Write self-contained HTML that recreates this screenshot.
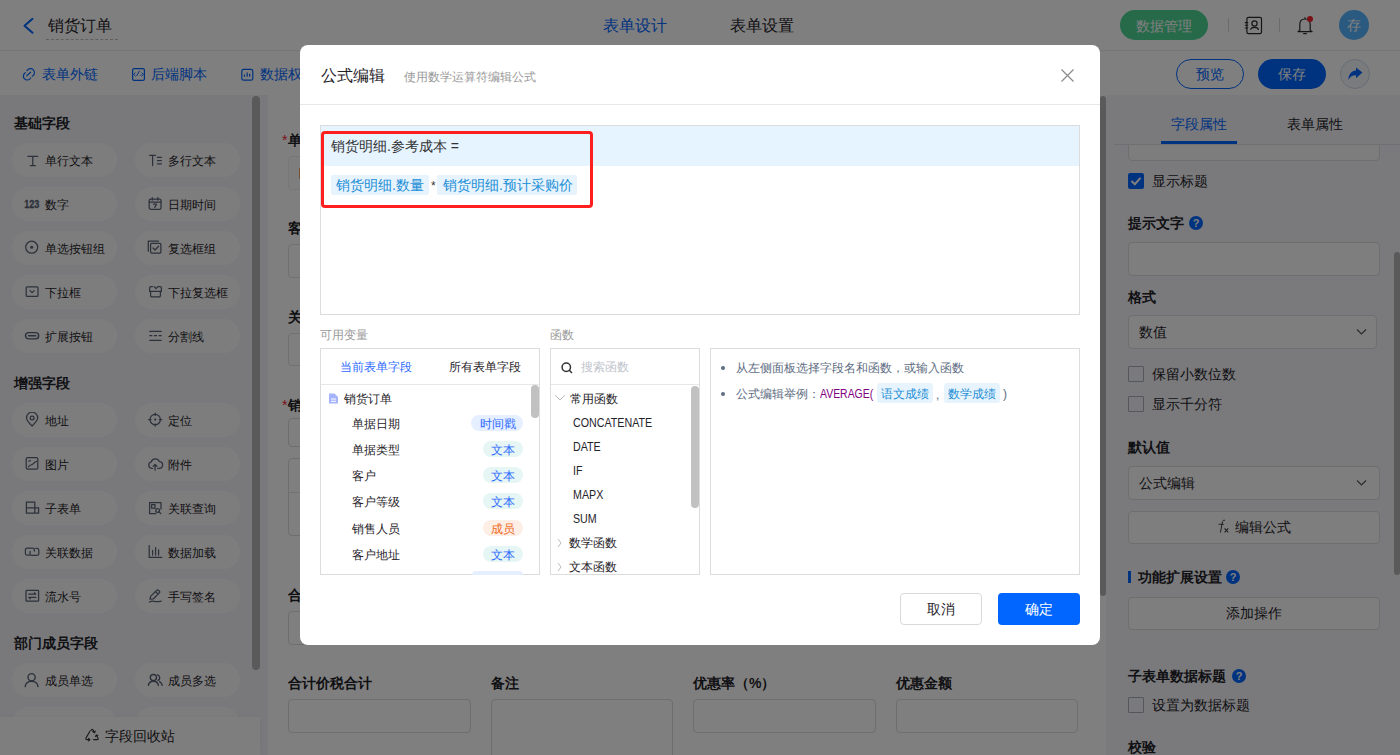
<!DOCTYPE html>
<html><head><meta charset="utf-8">
<style>
*{box-sizing:border-box;margin:0;padding:0}
html,body{width:1400px;height:755px;overflow:hidden;background:#fff;font-family:"Liberation Sans",sans-serif;color:#1f2329}
.a{position:absolute;display:block}
.t{position:absolute;white-space:nowrap;line-height:1}
</style></head><body>
<div class="a" style="left:0px;top:0px;width:1400px;height:51px;background:#fff;border-bottom:1px solid #e8e8e8"></div>
<svg class="a" style="left:22px;top:17px;" width="14" height="18" viewBox="0 0 14 18"><polyline points="10.5,1.8 2.5,8.8 10.5,15.8" fill="none" stroke="#0066ff" stroke-width="2" stroke-linecap="round" stroke-linejoin="round"/></svg>
<div class="t" style="left:48px;top:18px;font-size:16px;color:#1f2329;font-weight:normal;">销货订单</div>
<div class="a" style="left:46px;top:39px;width:72px;height:1px;border-top:1px dashed #bfbfbf"></div>
<div class="t" style="left:603px;top:18px;font-size:16px;color:#0066ff;font-weight:normal;">表单设计</div>
<div class="t" style="left:730px;top:18px;font-size:16px;color:#1f2329;font-weight:normal;">表单设置</div>
<div class="a" style="left:1120px;top:10px;width:88px;height:30px;background:#4cd494;border-radius:15px"></div>
<div class="t" style="left:1136px;top:19px;font-size:14px;color:#fff;font-weight:normal;">数据管理</div>
<div class="a" style="left:1228px;top:18px;width:1px;height:14px;background:#d9d9d9"></div>
<svg class="a" style="left:1244px;top:16px;" width="19" height="19" viewBox="0 0 19 19"><rect x="2.9" y="1.4" width="14.6" height="16.2" rx="1.6" fill="none" stroke="#2b2b2b" stroke-width="1.2"/><circle cx="10.5" cy="7.5" r="2.6" fill="none" stroke="#2b2b2b" stroke-width="1.2"/><path d="M6.6 13.8 C7 10.6 14 10.6 14.6 13.8" fill="none" stroke="#2b2b2b" stroke-width="1.2"/><path d="M0.8 6.6h3.4M0.8 9.3h3.4M0.8 12h3.4" stroke="#2b2b2b" stroke-width="1.1"/></svg>
<div class="a" style="left:1279px;top:18px;width:1px;height:14px;background:#d9d9d9"></div>
<svg class="a" style="left:1296px;top:15px;" width="18" height="20" viewBox="0 0 18 20"><path d="M3.8 15.5 V9.5 C3.8 6 5.8 4 9 4 C12.2 4 14.2 6 14.2 9.5 V15.5 L16 16.6 H2 Z" fill="none" stroke="#2b2b2b" stroke-width="1.2" stroke-linejoin="round"/><path d="M7.2 18.6 H10.8" stroke="#2b2b2b" stroke-width="1.2"/><path d="M9 2.2V4" stroke="#2b2b2b" stroke-width="1.2"/><circle cx="14" cy="4" r="3" fill="#f5222d"/></svg>
<div class="a" style="left:1339px;top:10px;width:30px;height:30px;background:#55b4ff;border-radius:50%"></div>
<div class="t" style="left:1347px;top:18px;font-size:14px;color:#fff;font-weight:normal;">存</div>
<div class="a" style="left:0px;top:51px;width:1400px;height:45px;background:#fff"></div>
<svg class="a" style="left:22px;top:67px;" width="14" height="14" viewBox="0 0 14 14"><path d="M4.7 8.9 L8.6 5.2" stroke="#0066ff" stroke-width="1.2" stroke-linecap="round"/><path d="M5 3.6 A4 4 0 1 1 10.3 9.2" fill="none" stroke="#0066ff" stroke-width="1.2" stroke-linecap="round"/><path d="M3.4 5.7 A3.9 3.9 0 1 0 8.7 11" fill="none" stroke="#0066ff" stroke-width="1.2" stroke-linecap="round"/></svg>
<div class="t" style="left:42px;top:67px;font-size:14px;color:#0066ff;font-weight:normal;">表单外链</div>
<svg class="a" style="left:132px;top:68px;" width="13" height="13" viewBox="0 0 13 13"><rect x="0.6" y="0.6" width="11.8" height="11.8" rx="1.5" fill="none" stroke="#0066ff" stroke-width="1.2"/><path d="M3.4 4.6 L1.6 6.4 L3.6 8.2 M9.6 4.6 L11.4 6.4 L9.4 8.2 M4.6 8 L7.5 2.7 M8.3 7.6 L9 6.6" fill="none" stroke="#0066ff" stroke-width="1"/></svg>
<div class="t" style="left:151px;top:67px;font-size:14px;color:#0066ff;font-weight:normal;">后端脚本</div>
<svg class="a" style="left:241px;top:68px;" width="13" height="13" viewBox="0 0 13 13"><rect x="0.8" y="1.4" width="11" height="10.8" rx="1.8" fill="none" stroke="#0066ff" stroke-width="1.2"/><path d="M3.5 8.8V6.4 M6.2 8.8V4.6 M8.7 8.8V5.8" stroke="#0066ff" stroke-width="1.2"/></svg>
<div class="t" style="left:260px;top:67px;font-size:14px;color:#0066ff;font-weight:normal;">数据权限</div>
<div class="a" style="left:1176px;top:59px;width:68px;height:30px;border:1px solid #0066ff;border-radius:15px;background:#fff"></div>
<div class="t" style="left:1196px;top:67px;font-size:14px;color:#0066ff;font-weight:normal;">预览</div>
<div class="a" style="left:1258px;top:59px;width:68px;height:30px;background:#0066ff;border-radius:15px"></div>
<div class="t" style="left:1278px;top:67px;font-size:14px;color:#fff;font-weight:normal;">保存</div>
<div class="a" style="left:1340px;top:59px;width:30px;height:30px;border:1px solid #cfd8e8;border-radius:50%;background:#f3f6fb"></div>
<svg class="a" style="left:1346px;top:66px;" width="18" height="16" viewBox="0 0 18 16"><path d="M10 1.4 L16.4 6.6 L10 12.2 V9.2 C6.5 9.2 4.2 10.6 2.3 14 C2.4 8.6 5.4 4.6 10 4.4 Z" fill="#0066ff"/></svg>
<div class="a" style="left:0px;top:95px;width:268px;height:660px;background:#f2f3f6"></div>
<div class="a" style="left:252px;top:96px;width:8px;height:574px;background:#b4b4b4;border-radius:4px"></div>
<div class="t" style="left:14px;top:116px;font-size:14px;color:#1f2329;font-weight:bold;">基础字段</div>
<div class="a" style="left:12px;top:143px;width:105px;height:34px;background:#fbfbfc;border-radius:17px"></div>
<svg class="a" style="left:24px;top:152px;" width="17" height="17" viewBox="0 0 17 17"><path d="M3.9 4.4H13.7 M8.8 4.4V13.6 M6.2 13.6H11.4" stroke="#596275" stroke-width="1.25" fill="none" stroke-linecap="round" stroke-linejoin="round"/></svg>
<div class="t" style="left:45px;top:155px;font-size:12px;color:#1f2329;font-weight:normal;">单行文本</div>
<div class="a" style="left:135px;top:143px;width:105px;height:34px;background:#fbfbfc;border-radius:17px"></div>
<svg class="a" style="left:147px;top:152px;" width="17" height="17" viewBox="0 0 17 17"><path d="M2.6 3.3H8.6 M5.6 3.3V13.6 M10.4 5.4H14.4 M10.4 8.6H14.4 M10.4 11.8H14.4" stroke="#596275" stroke-width="1.25" fill="none" stroke-linecap="round" stroke-linejoin="round"/></svg>
<div class="t" style="left:168px;top:155px;font-size:12px;color:#1f2329;font-weight:normal;">多行文本</div>
<div class="a" style="left:12px;top:187px;width:105px;height:34px;background:#fbfbfc;border-radius:17px"></div>
<svg class="a" style="left:24px;top:196px;" width="17" height="17" viewBox="0 0 17 17"><text x="0.2" y="11.6" font-size="10.6" font-weight="bold" font-family="Liberation Sans" fill="#596275" stroke="#596275" stroke-width="0.3" textLength="15.2" lengthAdjust="spacingAndGlyphs">123</text></svg>
<div class="t" style="left:45px;top:199px;font-size:12px;color:#1f2329;font-weight:normal;">数字</div>
<div class="a" style="left:135px;top:187px;width:105px;height:34px;background:#fbfbfc;border-radius:17px"></div>
<svg class="a" style="left:147px;top:196px;" width="17" height="17" viewBox="0 0 17 17"><rect x="2.2" y="3" width="11.8" height="10.4" rx="1.6" stroke="#596275" stroke-width="1.25" fill="none" stroke-linecap="round" stroke-linejoin="round"/><path d="M2.2 6.2H14 M5.3 1.6V4 M10.9 1.6V4 M6.6 8.2H9.4L7.8 11.4" stroke="#596275" stroke-width="1.25" fill="none" stroke-linecap="round" stroke-linejoin="round"/></svg>
<div class="t" style="left:168px;top:199px;font-size:12px;color:#1f2329;font-weight:normal;">日期时间</div>
<div class="a" style="left:12px;top:231px;width:105px;height:34px;background:#fbfbfc;border-radius:17px"></div>
<svg class="a" style="left:24px;top:240px;" width="17" height="17" viewBox="0 0 17 17"><circle cx="7.7" cy="7.2" r="6" stroke="#596275" stroke-width="1.25" fill="none" stroke-linecap="round" stroke-linejoin="round"/><circle cx="7.7" cy="7.2" r="1.5" fill="#596275"/></svg>
<div class="t" style="left:45px;top:243px;font-size:12px;color:#1f2329;font-weight:normal;">单选按钮组</div>
<div class="a" style="left:135px;top:231px;width:105px;height:34px;background:#fbfbfc;border-radius:17px"></div>
<svg class="a" style="left:147px;top:240px;" width="17" height="17" viewBox="0 0 17 17"><path d="M1.3 11.2V1.2H11.4" stroke="#596275" stroke-width="1.25" fill="none" stroke-linecap="round" stroke-linejoin="round"/><rect x="3.6" y="3.4" width="10.3" height="9.6" rx="1" stroke="#596275" stroke-width="1.25" fill="none" stroke-linecap="round" stroke-linejoin="round"/><path d="M6 8L8 10L11.6 6.2" stroke="#596275" stroke-width="1.25" fill="none" stroke-linecap="round" stroke-linejoin="round"/></svg>
<div class="t" style="left:168px;top:243px;font-size:12px;color:#1f2329;font-weight:normal;">复选框组</div>
<div class="a" style="left:12px;top:275px;width:105px;height:34px;background:#fbfbfc;border-radius:17px"></div>
<svg class="a" style="left:24px;top:284px;" width="17" height="17" viewBox="0 0 17 17"><rect x="2.2" y="2.8" width="11.8" height="9.6" rx="1" stroke="#596275" stroke-width="1.25" fill="none" stroke-linecap="round" stroke-linejoin="round"/><path d="M6 6.6L8.1 8.6L10.2 6.6" stroke="#596275" stroke-width="1.25" fill="none" stroke-linecap="round" stroke-linejoin="round"/></svg>
<div class="t" style="left:45px;top:287px;font-size:12px;color:#1f2329;font-weight:normal;">下拉框</div>
<div class="a" style="left:135px;top:275px;width:105px;height:34px;background:#fbfbfc;border-radius:17px"></div>
<svg class="a" style="left:147px;top:284px;" width="17" height="17" viewBox="0 0 17 17"><path d="M5.5 2.6H3.6A1.3 1.3 0 0 0 2.6 3.9V7.4H14.4V3.9A1.3 1.3 0 0 0 13.1 2.6H11.5" stroke="#596275" stroke-width="1.25" fill="none" stroke-linecap="round" stroke-linejoin="round"/><path d="M7.2 2.6L9 4.6L10.8 2.6" stroke="#596275" stroke-width="1.25" fill="none" stroke-linecap="round" stroke-linejoin="round"/><path d="M3.6 7.4V11.6A1.2 1.2 0 0 0 4.8 12.8H12.2A1.2 1.2 0 0 0 13.4 11.6V7.4" stroke="#596275" stroke-width="1.25" fill="none" stroke-linecap="round" stroke-linejoin="round"/></svg>
<div class="t" style="left:168px;top:287px;font-size:12px;color:#1f2329;font-weight:normal;">下拉复选框</div>
<div class="a" style="left:12px;top:319px;width:105px;height:34px;background:#fbfbfc;border-radius:17px"></div>
<svg class="a" style="left:24px;top:328px;" width="17" height="17" viewBox="0 0 17 17"><rect x="1.5" y="4.6" width="13.2" height="6.3" rx="3.15" stroke="#596275" stroke-width="1.4" fill="none"/><path d="M4.6 7.75H11.6" stroke="#596275" stroke-width="1.6" stroke-linecap="round"/></svg>
<div class="t" style="left:45px;top:331px;font-size:12px;color:#1f2329;font-weight:normal;">扩展按钮</div>
<div class="a" style="left:135px;top:319px;width:105px;height:34px;background:#fbfbfc;border-radius:17px"></div>
<svg class="a" style="left:147px;top:328px;" width="17" height="17" viewBox="0 0 17 17"><path d="M2.8 3.4H14.2 M2.8 7.7H4.9 M7.4 7.7H9.6 M12.1 7.7H14.2 M2.8 12.4H14.2" stroke="#596275" stroke-width="1.25" fill="none" stroke-linecap="round" stroke-linejoin="round"/></svg>
<div class="t" style="left:168px;top:331px;font-size:12px;color:#1f2329;font-weight:normal;">分割线</div>
<div class="t" style="left:14px;top:376px;font-size:14px;color:#1f2329;font-weight:bold;">增强字段</div>
<div class="a" style="left:12px;top:403px;width:105px;height:34px;background:#fbfbfc;border-radius:17px"></div>
<svg class="a" style="left:24px;top:412px;" width="17" height="17" viewBox="0 0 17 17"><path d="M8.1 14C4.2 10.3 2.5 7.9 2.5 5.8A5.6 5.6 0 0 1 13.7 5.8C13.7 7.9 12 10.3 8.1 14Z" stroke="#596275" stroke-width="1.25" fill="none" stroke-linecap="round" stroke-linejoin="round"/><circle cx="8.1" cy="6" r="1.9" stroke="#596275" stroke-width="1.25" fill="none" stroke-linecap="round" stroke-linejoin="round"/></svg>
<div class="t" style="left:45px;top:415px;font-size:12px;color:#1f2329;font-weight:normal;">地址</div>
<div class="a" style="left:135px;top:403px;width:105px;height:34px;background:#fbfbfc;border-radius:17px"></div>
<svg class="a" style="left:147px;top:412px;" width="17" height="17" viewBox="0 0 17 17"><circle cx="8.2" cy="7.6" r="5.2" stroke="#596275" stroke-width="1.25" fill="none" stroke-linecap="round" stroke-linejoin="round"/><circle cx="8.2" cy="7.6" r="1.1" fill="#596275"/><path d="M8.2 1V3.4 M8.2 11.8V14.2 M1.6 7.6H4 M12.4 7.6H14.8" stroke="#596275" stroke-width="1.25" fill="none" stroke-linecap="round" stroke-linejoin="round"/></svg>
<div class="t" style="left:168px;top:415px;font-size:12px;color:#1f2329;font-weight:normal;">定位</div>
<div class="a" style="left:12px;top:447px;width:105px;height:34px;background:#fbfbfc;border-radius:17px"></div>
<svg class="a" style="left:24px;top:456px;" width="17" height="17" viewBox="0 0 17 17"><rect x="2.2" y="1.6" width="11.6" height="11.6" rx="1.4" stroke="#596275" stroke-width="1.25" fill="none" stroke-linecap="round" stroke-linejoin="round"/><path d="M4.4 11C6 8 8 9.4 9.4 7.6C10.4 6.3 11.5 5.6 12.8 5.4 M4.8 5.2L6.2 4.6" stroke="#596275" stroke-width="1.25" fill="none" stroke-linecap="round" stroke-linejoin="round"/></svg>
<div class="t" style="left:45px;top:459px;font-size:12px;color:#1f2329;font-weight:normal;">图片</div>
<div class="a" style="left:135px;top:447px;width:105px;height:34px;background:#fbfbfc;border-radius:17px"></div>
<svg class="a" style="left:147px;top:456px;" width="17" height="17" viewBox="0 0 17 17"><path d="M5.5 12.3H4.6A3.2 3.2 0 0 1 4.2 6A4.3 4.3 0 0 1 12.3 5.6A3.3 3.3 0 0 1 12.2 12.3H10.7" stroke="#596275" stroke-width="1.25" fill="none" stroke-linecap="round" stroke-linejoin="round"/><path d="M8.1 14.2V8.6 M6.2 10.4L8.1 8.5L10 10.4" stroke="#596275" stroke-width="1.25" fill="none" stroke-linecap="round" stroke-linejoin="round"/></svg>
<div class="t" style="left:168px;top:459px;font-size:12px;color:#1f2329;font-weight:normal;">附件</div>
<div class="a" style="left:12px;top:491px;width:105px;height:34px;background:#fbfbfc;border-radius:17px"></div>
<svg class="a" style="left:24px;top:500px;" width="17" height="17" viewBox="0 0 17 17"><path d="M10.8 13.2H2.4V2H10.8V13.2 M2.4 7.8H10.8 M10.8 7.8H14.6V13.2H10.8" stroke="#596275" stroke-width="1.25" fill="none" stroke-linecap="round" stroke-linejoin="round"/></svg>
<div class="t" style="left:45px;top:503px;font-size:12px;color:#1f2329;font-weight:normal;">子表单</div>
<div class="a" style="left:135px;top:491px;width:105px;height:34px;background:#fbfbfc;border-radius:17px"></div>
<svg class="a" style="left:147px;top:500px;" width="17" height="17" viewBox="0 0 17 17"><path d="M14 9V2.6H2.6V13.6H9" stroke="#596275" stroke-width="1.25" fill="none" stroke-linecap="round" stroke-linejoin="round"/><rect x="4.6" y="4.6" width="3.4" height="3.4" stroke="#596275" stroke-width="1.25" fill="none" stroke-linecap="round" stroke-linejoin="round"/><circle cx="10.6" cy="10.4" r="1.9" stroke="#596275" stroke-width="1.25" fill="none" stroke-linecap="round" stroke-linejoin="round"/><path d="M12 11.8L13.8 13.6" stroke="#596275" stroke-width="1.25" fill="none" stroke-linecap="round" stroke-linejoin="round"/></svg>
<div class="t" style="left:168px;top:503px;font-size:12px;color:#1f2329;font-weight:normal;">关联查询</div>
<div class="a" style="left:12px;top:535px;width:105px;height:34px;background:#fbfbfc;border-radius:17px"></div>
<svg class="a" style="left:24px;top:544px;" width="17" height="17" viewBox="0 0 17 17"><path d="M5.6 11.2H3.2A1.8 1.8 0 0 1 1.4 9.4V5.8A1.8 1.8 0 0 1 3.2 4H8.6A1.8 1.8 0 0 1 10.4 5.8V7" stroke="#596275" stroke-width="1.25" fill="none" stroke-linecap="round" stroke-linejoin="round"/><path d="M6 7.4V9.6A1.8 1.8 0 0 0 7.8 11.4H13A1.8 1.8 0 0 0 14.8 9.6V6.2A1.8 1.8 0 0 0 13 4.4H11.8" stroke="#596275" stroke-width="1.25" fill="none" stroke-linecap="round" stroke-linejoin="round"/></svg>
<div class="t" style="left:45px;top:547px;font-size:12px;color:#1f2329;font-weight:normal;">关联数据</div>
<div class="a" style="left:135px;top:535px;width:105px;height:34px;background:#fbfbfc;border-radius:17px"></div>
<svg class="a" style="left:147px;top:544px;" width="17" height="17" viewBox="0 0 17 17"><path d="M2.2 1.6V13.4H14.8 M5.6 11V6.4 M8.6 11V3.6 M11.6 11V5.8" stroke="#596275" stroke-width="1.25" fill="none" stroke-linecap="round" stroke-linejoin="round"/></svg>
<div class="t" style="left:168px;top:547px;font-size:12px;color:#1f2329;font-weight:normal;">数据加载</div>
<div class="a" style="left:12px;top:579px;width:105px;height:34px;background:#fbfbfc;border-radius:17px"></div>
<svg class="a" style="left:24px;top:588px;" width="17" height="17" viewBox="0 0 17 17"><rect x="2" y="2.4" width="12.6" height="10.8" rx="0.8" stroke="#596275" stroke-width="1.25" fill="none" stroke-linecap="round" stroke-linejoin="round"/><path d="M4.8 6.2H11.8L10.4 4.8 M11.8 9.4H4.8L6.2 10.8" stroke="#596275" stroke-width="1.25" fill="none" stroke-linecap="round" stroke-linejoin="round"/></svg>
<div class="t" style="left:45px;top:591px;font-size:12px;color:#1f2329;font-weight:normal;">流水号</div>
<div class="a" style="left:135px;top:579px;width:105px;height:34px;background:#fbfbfc;border-radius:17px"></div>
<svg class="a" style="left:147px;top:588px;" width="17" height="17" viewBox="0 0 17 17"><path d="M3 11.2L3.6 8.4L9.8 2.2A1.1 1.1 0 0 1 11.4 2.2L12.4 3.2A1.1 1.1 0 0 1 12.4 4.8L6.2 11Z M8.6 3.6L11 6 M2.4 14C4 13 5.5 12.6 7.5 13.4C9.5 14 11.5 13.6 14.2 13.2" stroke="#596275" stroke-width="1.25" fill="none" stroke-linecap="round" stroke-linejoin="round"/></svg>
<div class="t" style="left:168px;top:591px;font-size:12px;color:#1f2329;font-weight:normal;">手写签名</div>
<div class="t" style="left:14px;top:636px;font-size:14px;color:#1f2329;font-weight:bold;">部门成员字段</div>
<div class="a" style="left:12px;top:663px;width:105px;height:34px;background:#fbfbfc;border-radius:17px"></div>
<svg class="a" style="left:24px;top:672px;" width="17" height="17" viewBox="0 0 17 17"><circle cx="7.6" cy="5.2" r="3.6" stroke="#596275" stroke-width="1.4" fill="none"/><path d="M1.2 14.6C1.6 10.8 4.2 9.4 7.6 9.4S13.6 10.8 14 14.6" stroke="#596275" stroke-width="1.4" fill="none" stroke-linecap="round"/></svg>
<div class="t" style="left:45px;top:675px;font-size:12px;color:#1f2329;font-weight:normal;">成员单选</div>
<div class="a" style="left:135px;top:663px;width:105px;height:34px;background:#fbfbfc;border-radius:17px"></div>
<svg class="a" style="left:147px;top:672px;" width="17" height="17" viewBox="0 0 17 17"><circle cx="6.4" cy="5.6" r="3.1" stroke="#596275" stroke-width="1.4" fill="none"/><path d="M1.4 13.4C1.8 10.4 3.8 9.2 6.4 9.2S11 10.4 11.4 13.4 M10.6 2.8A3 3 0 0 1 11 8.4 M12.6 9.6C14 10.4 14.8 11.6 15.2 13.4" stroke="#596275" stroke-width="1.4" fill="none" stroke-linecap="round"/></svg>
<div class="t" style="left:168px;top:675px;font-size:12px;color:#1f2329;font-weight:normal;">成员多选</div>
<div class="a" style="left:12px;top:707px;width:105px;height:34px;background:#fbfbfc;border-radius:17px"></div>
<svg class="a" style="left:24px;top:716px;" width="17" height="17" viewBox="0 0 17 17"><circle cx="7.6" cy="5.2" r="3.6" stroke="#596275" stroke-width="1.4" fill="none"/><path d="M1.2 14.6C1.6 10.8 4.2 9.4 7.6 9.4S13.6 10.8 14 14.6" stroke="#596275" stroke-width="1.4" fill="none" stroke-linecap="round"/></svg>
<div class="t" style="left:45px;top:719px;font-size:12px;color:#1f2329;font-weight:normal;">部门单选</div>
<div class="a" style="left:135px;top:707px;width:105px;height:34px;background:#fbfbfc;border-radius:17px"></div>
<svg class="a" style="left:147px;top:716px;" width="17" height="17" viewBox="0 0 17 17"><circle cx="6.4" cy="5.6" r="3.1" stroke="#596275" stroke-width="1.4" fill="none"/><path d="M1.4 13.4C1.8 10.4 3.8 9.2 6.4 9.2S11 10.4 11.4 13.4 M10.6 2.8A3 3 0 0 1 11 8.4 M12.6 9.6C14 10.4 14.8 11.6 15.2 13.4" stroke="#596275" stroke-width="1.4" fill="none" stroke-linecap="round"/></svg>
<div class="t" style="left:168px;top:719px;font-size:12px;color:#1f2329;font-weight:normal;">部门多选</div>
<div class="a" style="left:0px;top:717px;width:260px;height:38px;background:#fdfdfd;box-shadow:0 -1px 4px rgba(0,0,0,.04)"></div>
<svg class="a" style="left:84px;top:727px;" width="16" height="16" viewBox="0 0 16 16"><path d="M6.2 3.8L2.1 10.9Q1.3 12.6 3.1 12.6H5.8 M4.6 11.3L5.9 12.6L4.6 13.9 M9.6 12.6H13Q14.8 12.6 13.9 10.9L12.3 8.1 M13.8 8.6L12.2 7.9L11.6 9.6 M10.5 5.6L9.1 3.1Q8.2 1.6 7.3 3.1 M8.7 4.5L10.6 5.8L11.2 4.1" fill="none" stroke="#333" stroke-width="1.1" stroke-linecap="round" stroke-linejoin="round"/></svg>
<div class="t" style="left:105px;top:729px;font-size:14px;color:#1f2329;font-weight:normal;">字段回收站</div>
<div class="a" style="left:268px;top:95px;width:838px;height:660px;background:#fff"></div>
<div class="a" style="left:1100px;top:96px;width:6px;height:500px;background:#b4b4b4;border-radius:3px"></div>
<div class="t" style="left:282px;top:133px;font-size:14px;color:#f5222d;font-weight:normal;">*</div>
<div class="t" style="left:288px;top:133px;font-size:14px;color:#1f2329;font-weight:bold;">单据编号</div>
<div class="a" style="left:288px;top:156px;width:183px;height:34px;border:1px solid #efefef;border-radius:4px;background:#fcfcfc"></div>
<div class="a" style="left:299px;top:168px;width:1px;height:11px;background:#f0a060"></div>
<div class="t" style="left:288px;top:221px;font-size:14px;color:#1f2329;font-weight:bold;">客户</div>
<div class="a" style="left:288px;top:244px;width:183px;height:34px;border:1px solid #e2e2e2;border-radius:4px"></div>
<div class="t" style="left:288px;top:310px;font-size:14px;color:#1f2329;font-weight:bold;">关联销售人员</div>
<div class="a" style="left:288px;top:333px;width:183px;height:33px;border:1px solid #e2e2e2;border-radius:4px"></div>
<div class="t" style="left:282px;top:398px;font-size:14px;color:#f5222d;font-weight:normal;">*</div>
<div class="t" style="left:288px;top:398px;font-size:14px;color:#1f2329;font-weight:bold;">销货明细</div>
<div class="a" style="left:288px;top:418px;width:183px;height:29px;border:1px solid #dcdcdc;border-radius:4px"></div>
<div class="a" style="left:288px;top:458px;width:790px;height:78px;border:1px solid #dcdcdc;border-radius:4px"></div>
<div class="a" style="left:288px;top:492px;width:790px;height:1px;background:#e5e7eb"></div>
<div class="t" style="left:288px;top:588px;font-size:14px;color:#1f2329;font-weight:bold;">合计金额</div>
<div class="a" style="left:288px;top:611px;width:183px;height:34px;border:1px solid #dcdcdc;border-radius:4px"></div>
<div class="t" style="left:288px;top:676px;font-size:14px;color:#1f2329;font-weight:bold;">合计价税合计</div>
<div class="a" style="left:288px;top:699px;width:183px;height:34px;border:1px solid #dcdcdc;border-radius:4px"></div>
<div class="t" style="left:491px;top:676px;font-size:14px;color:#1f2329;font-weight:bold;">备注</div>
<div class="a" style="left:491px;top:699px;width:182px;height:80px;border:1px solid #dcdcdc;border-radius:4px"></div>
<div class="t" style="left:693px;top:676px;font-size:14px;color:#1f2329;font-weight:bold;">优惠率（%）</div>
<div class="a" style="left:693px;top:699px;width:183px;height:34px;border:1px solid #dcdcdc;border-radius:4px"></div>
<div class="t" style="left:896px;top:676px;font-size:14px;color:#1f2329;font-weight:bold;">优惠金额</div>
<div class="a" style="left:896px;top:699px;width:182px;height:34px;border:1px solid #dcdcdc;border-radius:4px"></div>
<div class="a" style="left:1106px;top:95px;width:294px;height:660px;background:#f4f5f8"></div>
<div class="a" style="left:1394px;top:252px;width:6px;height:323px;background:#b4b4b4;border-radius:3px"></div>
<div class="t" style="left:1171px;top:117px;font-size:14px;color:#0066ff;font-weight:normal;">字段属性</div>
<div class="t" style="left:1287px;top:117px;font-size:14px;color:#1f2329;font-weight:normal;">表单属性</div>
<div class="a" style="left:1114px;top:144px;width:286px;height:1px;background:#dfe1e6"></div>
<div class="a" style="left:1161px;top:141px;width:76px;height:3px;background:#0066ff"></div>
<div class="a" style="left:1128px;top:120px;width:252px;height:41px;border:1px solid #dcdcdc;border-radius:4px;background:#fafafa;clip-path:inset(25px 0 0 0)"></div>
<div class="a" style="left:1128px;top:173px;width:16px;height:16px;background:#0066ff;border-radius:2px"></div>
<svg class="a" style="left:1128px;top:173px;" width="16" height="16" viewBox="0 0 16 16"><path d="M3.5 8L6.8 11.2L12.5 4.8" fill="none" stroke="#fff" stroke-width="2"/></svg>
<div class="t" style="left:1152px;top:174px;font-size:14px;color:#1f2329;font-weight:normal;">显示标题</div>
<div class="t" style="left:1128px;top:216px;font-size:14px;color:#1f2329;font-weight:bold;">提示文字</div>
<svg class="a" style="left:1189px;top:216px;" width="14" height="14" viewBox="0 0 14 14"><circle cx="7" cy="7" r="7" fill="#0066ff"/><text x="7" y="11" text-anchor="middle" font-size="11" font-weight="bold" font-family="Liberation Sans" fill="#fff">?</text></svg>
<div class="a" style="left:1128px;top:242px;width:252px;height:34px;border:1px solid #dcdcdc;border-radius:4px;background:#fdfdfd"></div>
<div class="t" style="left:1128px;top:290px;font-size:14px;color:#1f2329;font-weight:bold;">格式</div>
<div class="a" style="left:1128px;top:315px;width:249px;height:34px;border:1px solid #dcdcdc;border-radius:4px;background:#fdfdfd"></div>
<div class="t" style="left:1139px;top:325px;font-size:14px;color:#1f2329;font-weight:normal;">数值</div>
<svg class="a" style="left:1356px;top:328px;" width="11" height="8" viewBox="0 0 11 8"><path d="M1 1.5L5.5 6L10 1.5" fill="none" stroke="#555" stroke-width="1.1"/></svg>
<div class="a" style="left:1128px;top:366px;width:16px;height:16px;border:1px solid #a9aeb9;border-radius:1px"></div>
<div class="t" style="left:1152px;top:367px;font-size:14px;color:#1f2329;font-weight:normal;">保留小数位数</div>
<div class="a" style="left:1128px;top:396px;width:16px;height:16px;border:1px solid #a9aeb9;border-radius:1px"></div>
<div class="t" style="left:1152px;top:397px;font-size:14px;color:#1f2329;font-weight:normal;">显示千分符</div>
<div class="t" style="left:1128px;top:440px;font-size:14px;color:#1f2329;font-weight:bold;">默认值</div>
<div class="a" style="left:1128px;top:466px;width:252px;height:34px;border:1px solid #dcdcdc;border-radius:4px;background:#fdfdfd"></div>
<div class="t" style="left:1139px;top:476px;font-size:14px;color:#1f2329;font-weight:normal;">公式编辑</div>
<svg class="a" style="left:1356px;top:479px;" width="11" height="8" viewBox="0 0 11 8"><path d="M1 1.5L5.5 6L10 1.5" fill="none" stroke="#555" stroke-width="1.1"/></svg>
<div class="a" style="left:1128px;top:511px;width:252px;height:33px;border:1px solid #dcdcdc;border-radius:4px;background:#fdfdfd"></div>
<svg class="a" style="left:1217px;top:519px;" width="13" height="15" viewBox="0 0 13 15"><path d="M8 1.3Q6.2 0.5 5.5 2.6L3.4 13.6 M1.6 5.3H6.8" fill="none" stroke="#444" stroke-width="1"/><path d="M7.6 9.4L11.2 13.4M11.2 9.4L7.6 13.4" fill="none" stroke="#444" stroke-width="1.1"/></svg>
<div class="t" style="left:1235px;top:520px;font-size:14px;color:#1f2329;font-weight:normal;">编辑公式</div>
<div class="a" style="left:1128px;top:571px;width:3px;height:12px;background:#0066ff"></div>
<div class="t" style="left:1138px;top:570px;font-size:14px;color:#1f2329;font-weight:bold;">功能扩展设置</div>
<svg class="a" style="left:1226px;top:570px;" width="14" height="14" viewBox="0 0 14 14"><circle cx="7" cy="7" r="7" fill="#0066ff"/><text x="7" y="11" text-anchor="middle" font-size="11" font-weight="bold" font-family="Liberation Sans" fill="#fff">?</text></svg>
<div class="a" style="left:1128px;top:597px;width:252px;height:33px;border:1px solid #dcdcdc;border-radius:4px;background:#fdfdfd"></div>
<div class="t" style="left:1226px;top:606px;font-size:14px;color:#1f2329;font-weight:normal;">添加操作</div>
<div class="t" style="left:1128px;top:669px;font-size:14px;color:#1f2329;font-weight:bold;">子表单数据标题</div>
<svg class="a" style="left:1232px;top:669px;" width="14" height="14" viewBox="0 0 14 14"><circle cx="7" cy="7" r="7" fill="#0066ff"/><text x="7" y="11" text-anchor="middle" font-size="11" font-weight="bold" font-family="Liberation Sans" fill="#fff">?</text></svg>
<div class="a" style="left:1128px;top:697px;width:16px;height:16px;border:1px solid #a9aeb9;border-radius:1px"></div>
<div class="t" style="left:1152px;top:698px;font-size:14px;color:#1f2329;font-weight:normal;">设置为数据标题</div>
<div class="t" style="left:1128px;top:740px;font-size:14px;color:#1f2329;font-weight:bold;">校验</div>
<div class="a" style="left:0px;top:0px;width:1400px;height:755px;background:rgba(0,0,0,.5)"></div>
<div class="a" style="left:300px;top:45px;width:800px;height:600px;background:#fff;border-radius:8px"></div>
<div class="t" style="left:321px;top:68px;font-size:16px;color:#1f2329;font-weight:normal;">公式编辑</div>
<div class="t" style="left:404px;top:71px;font-size:12px;color:#999;font-weight:normal;">使用数学运算符编辑公式</div>
<svg class="a" style="left:1060px;top:68px;" width="15" height="15" viewBox="0 0 15 15"><path d="M1.5 1.5L13.5 13.5M13.5 1.5L1.5 13.5" stroke="#8c8c8c" stroke-width="1.3"/></svg>
<div class="a" style="left:300px;top:104px;width:800px;height:1px;background:#e8e8e8"></div>
<div class="a" style="left:320px;top:125px;width:760px;height:190px;border:1px solid #dcdcdc;background:#fff"></div>
<div class="a" style="left:321px;top:126px;width:758px;height:40px;background:#e6f4ff"></div>
<div class="t" style="left:331px;top:139px;font-size:14px;color:#333;font-weight:normal;">销货明细.参考成本 =</div>
<div class="a" style="left:331px;top:175px;width:98px;height:20px;background:#e8f4fd;border-radius:2px"></div>
<div class="t" style="left:336px;top:178px;font-size:14px;color:#1c8fd6;font-weight:normal;">销货明细.数量</div>
<div class="t" style="left:431px;top:180px;font-size:12px;color:#333;font-weight:normal;">*</div>
<div class="a" style="left:437px;top:175px;width:140px;height:20px;background:#e8f4fd;border-radius:2px"></div>
<div class="t" style="left:443px;top:178px;font-size:14px;color:#1c8fd6;font-weight:normal;">销货明细.预计采购价</div>
<div class="a" style="left:321px;top:131px;width:272px;height:77px;border:3px solid #ff1f1f;border-radius:4px"></div>
<div class="t" style="left:320px;top:329px;font-size:12px;color:#999;font-weight:normal;">可用变量</div>
<div class="t" style="left:550px;top:329px;font-size:12px;color:#999;font-weight:normal;">函数</div>
<div class="a" style="left:320px;top:348px;width:220px;height:227px;border:1px solid #dcdcdc;background:#fff"></div>
<div class="t" style="left:340px;top:361px;font-size:12px;color:#2f6bff;font-weight:normal;">当前表单字段</div>
<div class="t" style="left:449px;top:361px;font-size:12px;color:#1f2329;font-weight:normal;">所有表单字段</div>
<div class="a" style="left:321px;top:384px;width:218px;height:1px;background:#e5e7eb"></div>
<svg class="a" style="left:328px;top:393px;" width="11" height="11" viewBox="0 0 11 11"><path d="M1 0.5H6.5L10 4V10.5H1Z" fill="#a5b4fc"/><path d="M3 6H8M3 8.3H8" stroke="#fff" stroke-width="1"/></svg>
<div class="t" style="left:344px;top:393px;font-size:12px;color:#1f2329;font-weight:normal;">销货订单</div>
<div class="t" style="left:352px;top:418px;font-size:12px;color:#1f2329;font-weight:normal;">单据日期</div>
<div class="a" style="left:471px;top:415px;width:52px;height:16px;background:#e6efff;border-radius:8px"></div>
<div class="t" style="left:480px;top:418px;font-size:12px;color:#2f6bff;font-weight:normal;">时间戳</div>
<div class="t" style="left:352px;top:444px;font-size:12px;color:#1f2329;font-weight:normal;">单据类型</div>
<div class="a" style="left:483px;top:441px;width:40px;height:16px;background:#e6f6f4;border-radius:8px"></div>
<div class="t" style="left:491px;top:444px;font-size:12px;color:#2f6bff;font-weight:normal;">文本</div>
<div class="t" style="left:352px;top:470px;font-size:12px;color:#1f2329;font-weight:normal;">客户</div>
<div class="a" style="left:483px;top:467px;width:40px;height:16px;background:#e6f6f4;border-radius:8px"></div>
<div class="t" style="left:491px;top:470px;font-size:12px;color:#2f6bff;font-weight:normal;">文本</div>
<div class="t" style="left:352px;top:496px;font-size:12px;color:#1f2329;font-weight:normal;">客户等级</div>
<div class="a" style="left:483px;top:493px;width:40px;height:16px;background:#e6f6f4;border-radius:8px"></div>
<div class="t" style="left:491px;top:496px;font-size:12px;color:#2f6bff;font-weight:normal;">文本</div>
<div class="t" style="left:352px;top:523px;font-size:12px;color:#1f2329;font-weight:normal;">销售人员</div>
<div class="a" style="left:483px;top:520px;width:40px;height:16px;background:#fdeee6;border-radius:8px"></div>
<div class="t" style="left:491px;top:523px;font-size:12px;color:#f26b1d;font-weight:normal;">成员</div>
<div class="t" style="left:352px;top:549px;font-size:12px;color:#1f2329;font-weight:normal;">客户地址</div>
<div class="a" style="left:483px;top:546px;width:40px;height:16px;background:#e6f6f4;border-radius:8px"></div>
<div class="t" style="left:491px;top:549px;font-size:12px;color:#2f6bff;font-weight:normal;">文本</div>
<div class="a" style="left:472px;top:571px;width:51px;height:4px;background:#e6efff;border-radius:8px 8px 0 0"></div>
<div class="a" style="left:531px;top:385px;width:8px;height:33px;background:#c1c1c1;border-radius:4px"></div>
<div class="a" style="left:550px;top:348px;width:150px;height:227px;border:1px solid #dcdcdc;background:#fff"></div>
<svg class="a" style="left:561px;top:362px;" width="12" height="12" viewBox="0 0 12 12"><circle cx="5.3" cy="5.3" r="4.2" fill="none" stroke="#333" stroke-width="1.5"/><path d="M8.3 8.3L11 11" stroke="#333" stroke-width="1.5"/></svg>
<div class="t" style="left:581px;top:361px;font-size:12px;color:#c0c4cc;font-weight:normal;">搜索函数</div>
<div class="a" style="left:551px;top:384px;width:148px;height:1px;background:#e5e7eb"></div>
<div class="a" style="left:691px;top:386px;width:8px;height:122px;background:#c1c1c1;border-radius:4px"></div>
<svg class="a" style="left:554px;top:394px;" width="12" height="8" viewBox="0 0 12 8"><path d="M1 1L6 6L11 1" fill="none" stroke="#bbb" stroke-width="1"/></svg>
<div class="t" style="left:570px;top:393px;font-size:12px;color:#1f2329;font-weight:normal;">常用函数</div>
<div class="t" style="left:573px;top:417px;font-size:12px;color:#1f2329;font-weight:normal;transform:scaleX(0.89);transform-origin:0 0">CONCATENATE</div>
<div class="t" style="left:573px;top:441px;font-size:12px;color:#1f2329;font-weight:normal;transform:scaleX(0.89);transform-origin:0 0">DATE</div>
<div class="t" style="left:573px;top:465px;font-size:12px;color:#1f2329;font-weight:normal;transform:scaleX(0.89);transform-origin:0 0">IF</div>
<div class="t" style="left:573px;top:489px;font-size:12px;color:#1f2329;font-weight:normal;transform:scaleX(0.89);transform-origin:0 0">MAPX</div>
<div class="t" style="left:573px;top:513px;font-size:12px;color:#1f2329;font-weight:normal;transform:scaleX(0.89);transform-origin:0 0">SUM</div>
<svg class="a" style="left:557px;top:538px;" width="5" height="10" viewBox="0 0 5 10"><path d="M1 1L4 5L1 9" fill="none" stroke="#bbb" stroke-width="1"/></svg>
<div class="t" style="left:569px;top:537px;font-size:12px;color:#1f2329;font-weight:normal;">数学函数</div>
<svg class="a" style="left:557px;top:562px;" width="5" height="10" viewBox="0 0 5 10"><path d="M1 1L4 5L1 9" fill="none" stroke="#bbb" stroke-width="1"/></svg>
<div class="t" style="left:569px;top:561px;font-size:12px;color:#1f2329;font-weight:normal;">文本函数</div>
<div class="a" style="left:710px;top:348px;width:370px;height:227px;border:1px solid #dcdcdc;background:#fff"></div>
<div class="a" style="left:721px;top:366px;width:4px;height:4px;background:#5e6d82;border-radius:50%"></div>
<div class="t" style="left:736px;top:362px;font-size:12px;color:#5e6d82;font-weight:normal;">从左侧面板选择字段名和函数，或输入函数</div>
<div class="a" style="left:721px;top:392px;width:4px;height:4px;background:#5e6d82;border-radius:50%"></div>
<div class="t" style="left:736px;top:388px;font-size:12px;color:#5e6d82;font-weight:normal;">公式编辑举例：</div>
<div class="t" style="left:820px;top:388px;font-size:12px;color:#800080;font-weight:normal;transform:scaleX(0.87);transform-origin:0 0">AVERAGE(</div>
<div class="a" style="left:877px;top:383px;width:56px;height:20px;background:#e8f4fd;border-radius:3px"></div>
<div class="t" style="left:881px;top:388px;font-size:12px;color:#1c8fd6;font-weight:normal;">语文成绩</div>
<div class="t" style="left:936px;top:389px;font-size:12px;color:#5e6d82;font-weight:normal;">,</div>
<div class="a" style="left:944px;top:383px;width:56px;height:20px;background:#e8f4fd;border-radius:3px"></div>
<div class="t" style="left:948px;top:388px;font-size:12px;color:#1c8fd6;font-weight:normal;">数学成绩</div>
<div class="t" style="left:1003px;top:388px;font-size:12px;color:#5e6d82;font-weight:normal;">)</div>
<div class="a" style="left:900px;top:593px;width:82px;height:32px;border:1px solid #d9d9d9;border-radius:4px;background:#fff"></div>
<div class="t" style="left:927px;top:602px;font-size:14px;color:#1f2329;font-weight:normal;">取消</div>
<div class="a" style="left:998px;top:593px;width:82px;height:32px;background:#0066ff;border-radius:4px"></div>
<div class="t" style="left:1025px;top:602px;font-size:14px;color:#fff;font-weight:normal;">确定</div>
</body></html>
